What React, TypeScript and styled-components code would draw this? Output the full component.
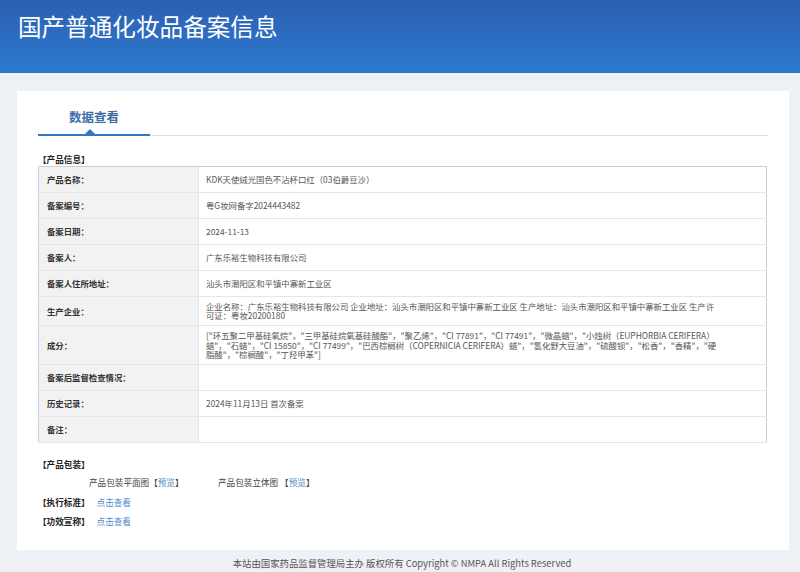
import React from "react";
import styled, { createGlobalStyle } from "styled-components";

const GlobalStyle = createGlobalStyle`
  html, body { margin: 0; padding: 0; }
  body {
    background: #eef2f6;
    font-family: "Noto Sans CJK SC", "Noto Sans", sans-serif;
    color: #333;
  }
`;

const Page = styled.div`
  width: 800px;
  min-height: 572px;
  display: flex;
  flex-direction: column;
`;

const Header = styled.header`
  height: 73px;
  box-sizing: border-box;
  padding: 7px 0 0 18px;
  background: linear-gradient(180deg, #2c5fb1 0%, #2d6dc1 50%, #2a79cd 100%);
`;

const Title = styled.h1`
  margin: 0;
  font-size: 23.6px;
  line-height: 38px;
  font-weight: 400;
  color: #ffffff;
`;

const Main = styled.main`
  padding: 18px 11px 0 17px;
`;

const Card = styled.section`
  background: #ffffff;
  box-sizing: border-box;
  height: 459px;
  padding: 0 21px;
`;

const TabBar = styled.div`
  display: flex;
  border-bottom: 1px solid #dcdfe4;
  height: 44px;
`;

const Tab = styled.div`
  position: relative;
  width: 112px;
  box-sizing: border-box;
  padding-top: 17px;
  text-align: center;
  font-size: 12.5px;
  line-height: 18px;
  font-weight: 700;
  color: #3a6ca6;
  &::after {
    content: "";
    position: absolute;
    left: 0;
    right: 0;
    bottom: -1px;
    height: 2px;
    background: #2f7bc2;
  }
  &::before {
    content: "";
    position: absolute;
    left: 47px;
    bottom: 1px;
    border-left: 5px solid transparent;
    border-right: 5px solid transparent;
    border-bottom: 5px solid #2f7bc2;
  }
`;

const SectionTitle = styled.div<{ $top: number }>`
  margin-top: ${(p) => p.$top}px;
  font-size: 8.6px;
  line-height: 12px;
  font-weight: 700;
  color: #222;
`;

const Table = styled.table`
  width: 729px;
  border-collapse: collapse;
  border: 1px solid #c7cfdc;
  font-size: 8.4px;
  line-height: 9.2px;
  margin-top: 1px;
`;

const Row = styled.tr`
  border-bottom: 1px solid #e4e6ea;
`;

const Label = styled.td`
  width: 160px;
  box-sizing: border-box;
  height: 26px;
  padding: 4px 8px;
  background: #f2f2f2;
  border-right: 1px solid #e2e4e8;
  font-weight: 700;
  color: #333;
  vertical-align: middle;
`;

const Value = styled.td`
  box-sizing: border-box;
  height: 26px;
  padding: 5px 46px 5px 7px;
  color: #555;
  vertical-align: middle;
`;

const PackRow = styled.div`
  display: flex;
  margin-top: 6px;
  padding-left: 51px;
  font-size: 8.6px;
  line-height: 12px;
  color: #444;
`;

const PackItem = styled.span<{ $width?: number }>`
  width: ${(p) => (p.$width ? `${p.$width}px` : "auto")};
`;

const Link = styled.a`
  color: #4a8ac6;
  text-decoration: none;
`;

const InfoLine = styled.div<{ $top: number }>`
  display: flex;
  gap: 7px;
  margin-top: ${(p) => p.$top}px;
  font-size: 8.6px;
  line-height: 12px;
`;

const InfoLabel = styled.span`
  font-weight: 700;
  color: #222;
`;

const Footer = styled.footer`
  height: 24px;
  display: flex;
  align-items: center;
  justify-content: center;
  padding: 2px 0 0 4px;
  box-sizing: border-box;
  font-size: 9.4px;
  color: #555;
`;

const rows: [string, string][] = [
  ["产品名称：", "KDK天使绒光国色不沾杯口红（03伯爵豆沙）"],
  ["备案编号：", "粤G妆网备字2024443482"],
  ["备案日期：", "2024-11-13"],
  ["备案人：", "广东乐裕生物科技有限公司"],
  ["备案人住所地址：", "汕头市潮阳区和平镇中寨新工业区"],
  [
    "生产企业：",
    "企业名称：广东乐裕生物科技有限公司 企业地址：汕头市潮阳区和平镇中寨新工业区 生产地址：汕头市潮阳区和平镇中寨新工业区 生产许可证：粤妆20200180",
  ],
  [
    "成分：",
    "[\"环五聚二甲基硅氧烷\"，\"三甲基硅烷氧基硅酸酯\"，\"聚乙烯\"，\"CI 77891\"，\"CI 77491\"，\"微晶蜡\"，\"小烛树（EUPHORBIA CERIFERA）蜡\"，\"石蜡\"，\"CI 15850\"，\"CI 77499\"，\"巴西棕榈树（COPERNICIA CERIFERA）蜡\"，\"氢化野大豆油\"，\"硫酸钡\"，\"松香\"，\"香精\"，\"硬脂酸\"，\"棕榈酸\"，\"丁羟甲苯\"]",
  ],
  ["备案后监督检查情况：", ""],
  ["历史记录：", "2024年11月13日 首次备案"],
  ["备注：", ""],
];

export default function App() {
  return (
    <>
      <GlobalStyle />
      <Page>
        <Header>
          <Title>国产普通化妆品备案信息</Title>
        </Header>
        <Main>
          <Card>
            <TabBar>
              <Tab>数据查看</Tab>
            </TabBar>
            <SectionTitle $top={17}>【产品信息】</SectionTitle>
            <Table>
              <tbody>
                {rows.map(([k, v]) => (
                  <Row key={k}>
                    <Label>{k}</Label>
                    <Value>{v}</Value>
                  </Row>
                ))}
              </tbody>
            </Table>
            <SectionTitle $top={15}>【产品包装】</SectionTitle>
            <PackRow>
              <PackItem $width={129}>
                产品包装平面图【<Link href="#">预览</Link>】
              </PackItem>
              <PackItem>
                产品包装立体图 【<Link href="#">预览</Link>】
              </PackItem>
            </PackRow>
            <InfoLine $top={8}>
              <InfoLabel>【执行标准】</InfoLabel>
              <Link href="#">点击查看</Link>
            </InfoLine>
            <InfoLine $top={7}>
              <InfoLabel>【功效宣称】</InfoLabel>
              <Link href="#">点击查看</Link>
            </InfoLine>
          </Card>
        </Main>
        <Footer>本站由国家药品监督管理局主办 版权所有 Copyright © NMPA All Rights Reserved</Footer>
      </Page>
    </>
  );
}
